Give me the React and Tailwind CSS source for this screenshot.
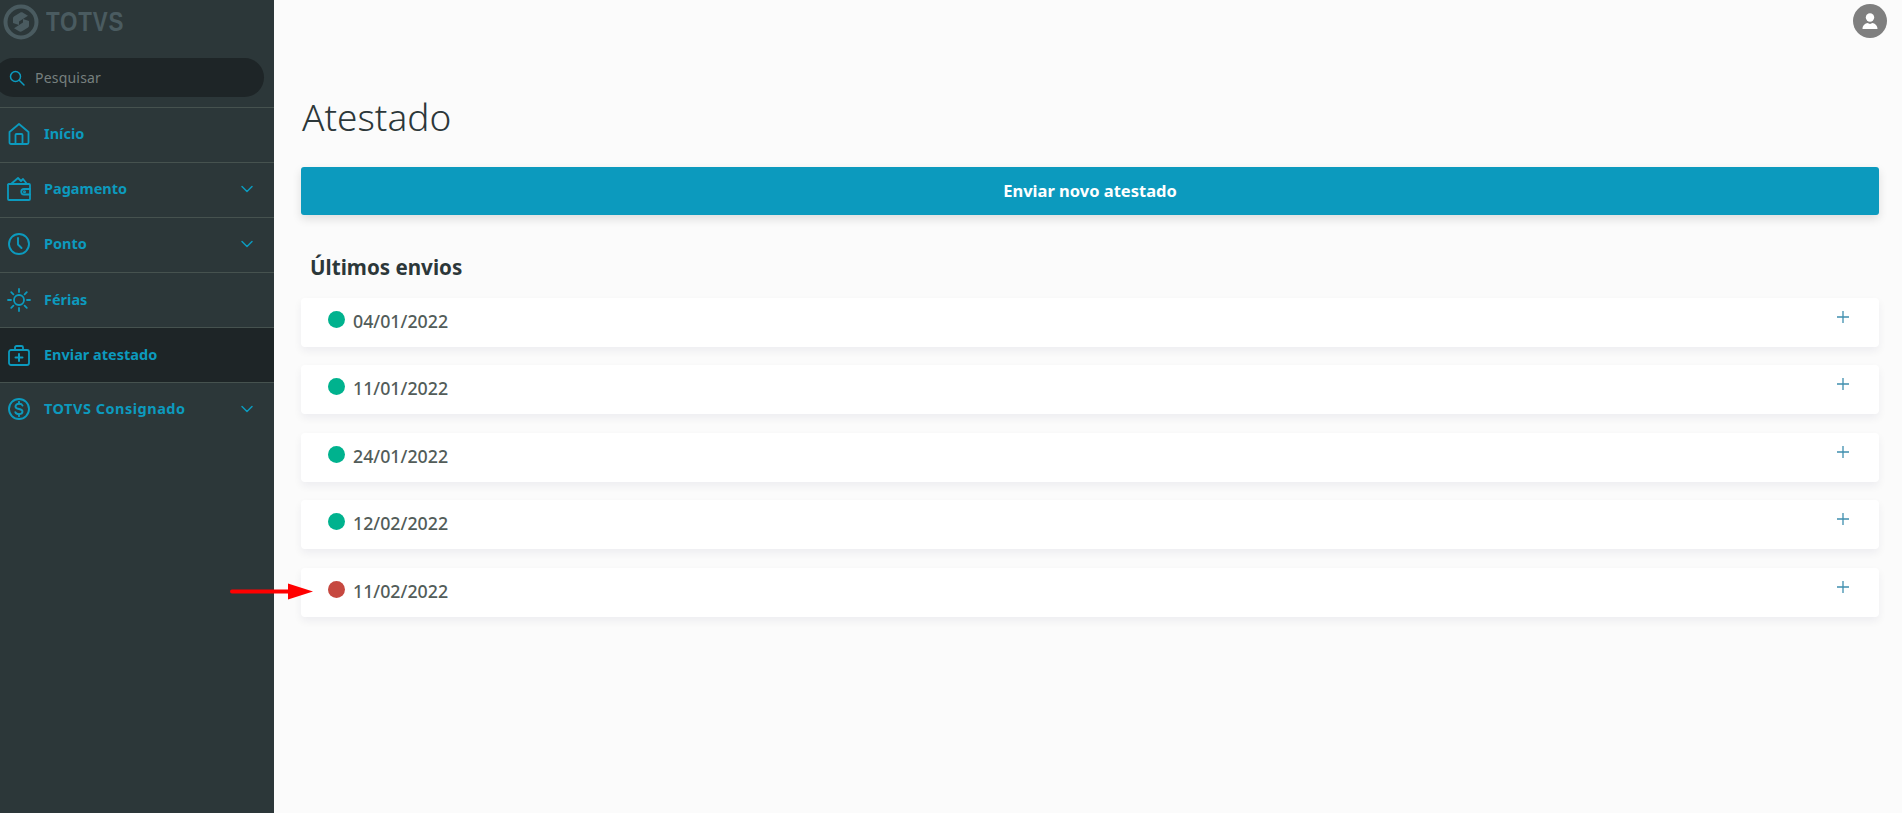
import React from "react";

const blue = "#0c9abe";

function Ic({ children, size = 24, sw = 1.8 }) {
  return (
    <svg width={size} height={size} viewBox="0 0 24 24" fill="none" stroke={blue} strokeWidth={sw} strokeLinecap="round" strokeLinejoin="round">
      {children}
    </svg>
  );
}

const Home = () => (
  <Ic>
    <path d="M2.500 10 12 2l9.500 8v10.500a1.500 1.500 0 0 1-1.500 1.500H4a1.500 1.500 0 0 1-1.500-1.500Z" />
    <path d="M8.500 22v-9a1 1 0 0 1 1-1h5a1 1 0 0 1 1 1v9" />
  </Ic>
);
const Wallet = () => (
  <Ic>
    <path d="M1 8.500V22a1 1 0 0 0 1 1h20a1 1 0 0 0 1-1V8a1 1 0 0 0-1-1H2a1 1 0 0 0-1 1.500" />
    <path d="M4 7l7-6 3 3 2-2 4 5" />
    <path d="M23 12h-6a2.500 2.500 0 0 0 0 5.500h6" />
    <circle cx="17.500" cy="14.700" r="0.600" />
  </Ic>
);
const Clock = () => (
  <Ic sw={1.9}>
    <circle cx="12" cy="12" r="10" />
    <path d="M11 6v6.500l3.500 3.500" />
  </Ic>
);
const Sun = () => (
  <Ic>
    <circle cx="12" cy="12" r="5" />
    <path d="M12 1v3M12 20v3M1 12h3M20 12h3M4.200 4.200l2.200 2.200M17.600 17.600l2.200 2.200M4.200 19.800l2.200-2.200M17.600 6.400l2.200-2.200" />
  </Ic>
);
const Kit = () => (
  <Ic>
    <rect x="2" y="7" width="20" height="15" rx="2" />
    <path d="M8 7V4.500A1.500 1.500 0 0 1 9.500 3h5A1.500 1.500 0 0 1 16 4.500V7" />
    <path d="M12 11v7M8.500 14.500h7" strokeWidth="2" />
  </Ic>
);
const Dollar = () => (
  <Ic sw={1.9}>
    <circle cx="12" cy="12" r="10" />
    <path d="M15.500 8.500C15 7.300 13.800 6.800 12 6.800c-2 0-3.500 1-3.500 2.600 0 3.600 7 1.600 7 5.200 0 1.600-1.500 2.600-3.500 2.600-1.800 0-3.200-.7-3.700-2" />
    <path d="M12 4.800v2M12 17.200v2" />
  </Ic>
);
const Chevron = () => (
  <svg width="14" height="14" viewBox="0 0 14 14" fill="none" stroke={blue} strokeWidth="1.500" strokeLinecap="round" strokeLinejoin="round">
    <path d="M2 4.500 7 9.500l5-5" />
  </svg>
);

const menu = [
  { label: "Início", Icon: Home, pb: "pb-[3px]" },
  { label: "Pagamento", Icon: Wallet, chevron: true, pb: "pb-[3px]" },
  { label: "Ponto", Icon: Clock, chevron: true, pb: "pb-[3px]" },
  { label: "Férias", Icon: Sun, pb: "pb-[1px]" },
  { label: "Enviar atestado", Icon: Kit, active: true, pb: "pb-[1px]" },
  { label: "TOTVS Consignado", Icon: Dollar, chevron: true, pb: "pb-[2px]", track: "tracking-[0.5px]" },
];

const rows = [
  { date: "04/01/2022", color: "bg-[#00b28e]" },
  { date: "11/01/2022", color: "bg-[#00b28e]" },
  { date: "24/01/2022", color: "bg-[#00b28e]" },
  { date: "12/02/2022", color: "bg-[#00b28e]" },
  { date: "11/02/2022", color: "bg-[#c64840]", arrow: true },
];

export default function App() {
  return (
    <div className="flex h-[813px] overflow-hidden bg-[#fbfbfb] font-['Noto_Sans','Open_Sans',sans-serif]">
      <aside className="w-[274px] shrink-0 overflow-hidden bg-[#2c3739]">
        <div className="flex h-[42px] items-center pl-[3px] pt-[1px]">
          <svg width="36" height="36" viewBox="0 0 36 36" fill="none">
            <circle cx="18" cy="18" r="15.500" stroke="#4a5b60" strokeWidth="4" />
            <path d="M10 19v-4.500c0-1 .4-1.700 1.300-2.300L17 8.800c1-.6 2-.6 3 0l5 3-9 5.700v3.500Z" fill="#4a5b60" />
            <path d="M26 17v4.500c0 1-.4 1.700-1.300 2.300L19 27.200c-1 .6-2 .6-3 0l-5-3 9-5.700V15Z" fill="#4a5b60" />
          </svg>
          <span className="ml-[7px] origin-left scale-x-[0.8] font-['Liberation_Sans',sans-serif] text-[28px] font-bold leading-none tracking-[1px] text-[#4a5b60]">TOTVS</span>
        </div>
        <div className="-ml-[6px] mt-[16px] flex h-[39px] w-[270px] items-center rounded-[20px] bg-[#1e2527] pl-[15px]">
          <svg width="16" height="16" viewBox="0 0 16 16" fill="none" stroke={blue} strokeWidth="1.500" strokeLinecap="round">
            <circle cx="6.500" cy="6.500" r="5" />
            <path d="m10.500 10.500 4.500 4.500" />
          </svg>
          <span className="ml-[10px] text-[14px] leading-none tracking-[0.2px] text-[#77807f]">Pesquisar</span>
        </div>
        <nav className="mt-[10px]">
          {menu.map(({ label, Icon, chevron, active, pb, track }) => (
            <div
              key={label}
              className={`flex h-[55px] items-center border-t border-[#46524f] pl-[7px] pr-[20px] ${pb} ${active ? "bg-[#1e2527]" : ""}`}
            >
              <span className="flex w-[24px] justify-center">
                <Icon />
              </span>
              <span className={`ml-[13px] flex-1 text-[14.500px] font-bold text-[#0c9abe] ${track || ""}`}>{label}</span>
              {chevron && <Chevron />}
            </div>
          ))}
        </nav>
      </aside>

      <main className="min-w-0 flex-1 pl-[27px] pr-[23px]">
        <div className="-mr-[8px] flex justify-end pt-[4px]">
          <div className="flex h-[34px] w-[34px] items-center justify-center rounded-full bg-[#7f7f7f]">
            <svg width="20" height="20" viewBox="0 0 20 20" fill="#ffffff">
              <circle cx="10" cy="6.500" r="4.200" />
              <path d="M2.500 18c0-4 3-5.500 5-6l2.500 1 2.500-1c2 .5 5 2 5 6Z" />
            </svg>
          </div>
        </div>
        <h1 className="mt-[54px] h-[50px] pl-[1px] text-[37px] font-light leading-[50px] text-[#2c3739]">Atestado</h1>
        <button className="mt-[25px] flex h-[48px] w-full items-center justify-center rounded-[3px] bg-[#0c9abe] text-[16.500px] font-bold text-white shadow-[0_4px_10px_rgba(0,0,0,0.12)]">
          Enviar novo atestado
        </button>
        <h2 className="mt-[37px] h-[30px] pl-[9px] text-[20.600px] font-bold leading-[30px] text-[#2c3739]">Últimos envios</h2>
        <div className="mt-[15.900px] flex flex-col gap-[18.500px]">
          {rows.map((r) => (
            <div key={r.date} className="relative flex h-[49px] items-start rounded-[4px] bg-white pl-[27px] pr-[29px] shadow-[0_4px_8px_rgba(0,20,60,0.06)]">
              <span className={`mt-[13px] h-[17px] w-[17px] shrink-0 rounded-full ${r.color}`} />
              <span className="ml-[8px] mt-[11px] flex-1 text-[17.800px] font-medium leading-[24px] text-[#525c59]">{r.date}</span>
              <svg className="mt-[12px]" width="14" height="14" viewBox="0 0 14 14" fill="none" stroke="#3f8fae" strokeWidth="1.300">
                <path d="M7 1v12M1 7h12" />
              </svg>
              {r.arrow && (
                <svg className="absolute left-[-71px] top-[14px]" width="85" height="18" viewBox="0 0 85 18">
                  <path d="M2 9.500h58" stroke="#ff0000" strokeWidth="4" strokeLinecap="round" />
                  <path d="M58 1.500l25 8-25 8Z" fill="#ff0000" />
                </svg>
              )}
            </div>
          ))}
        </div>
      </main>
    </div>
  );
}
